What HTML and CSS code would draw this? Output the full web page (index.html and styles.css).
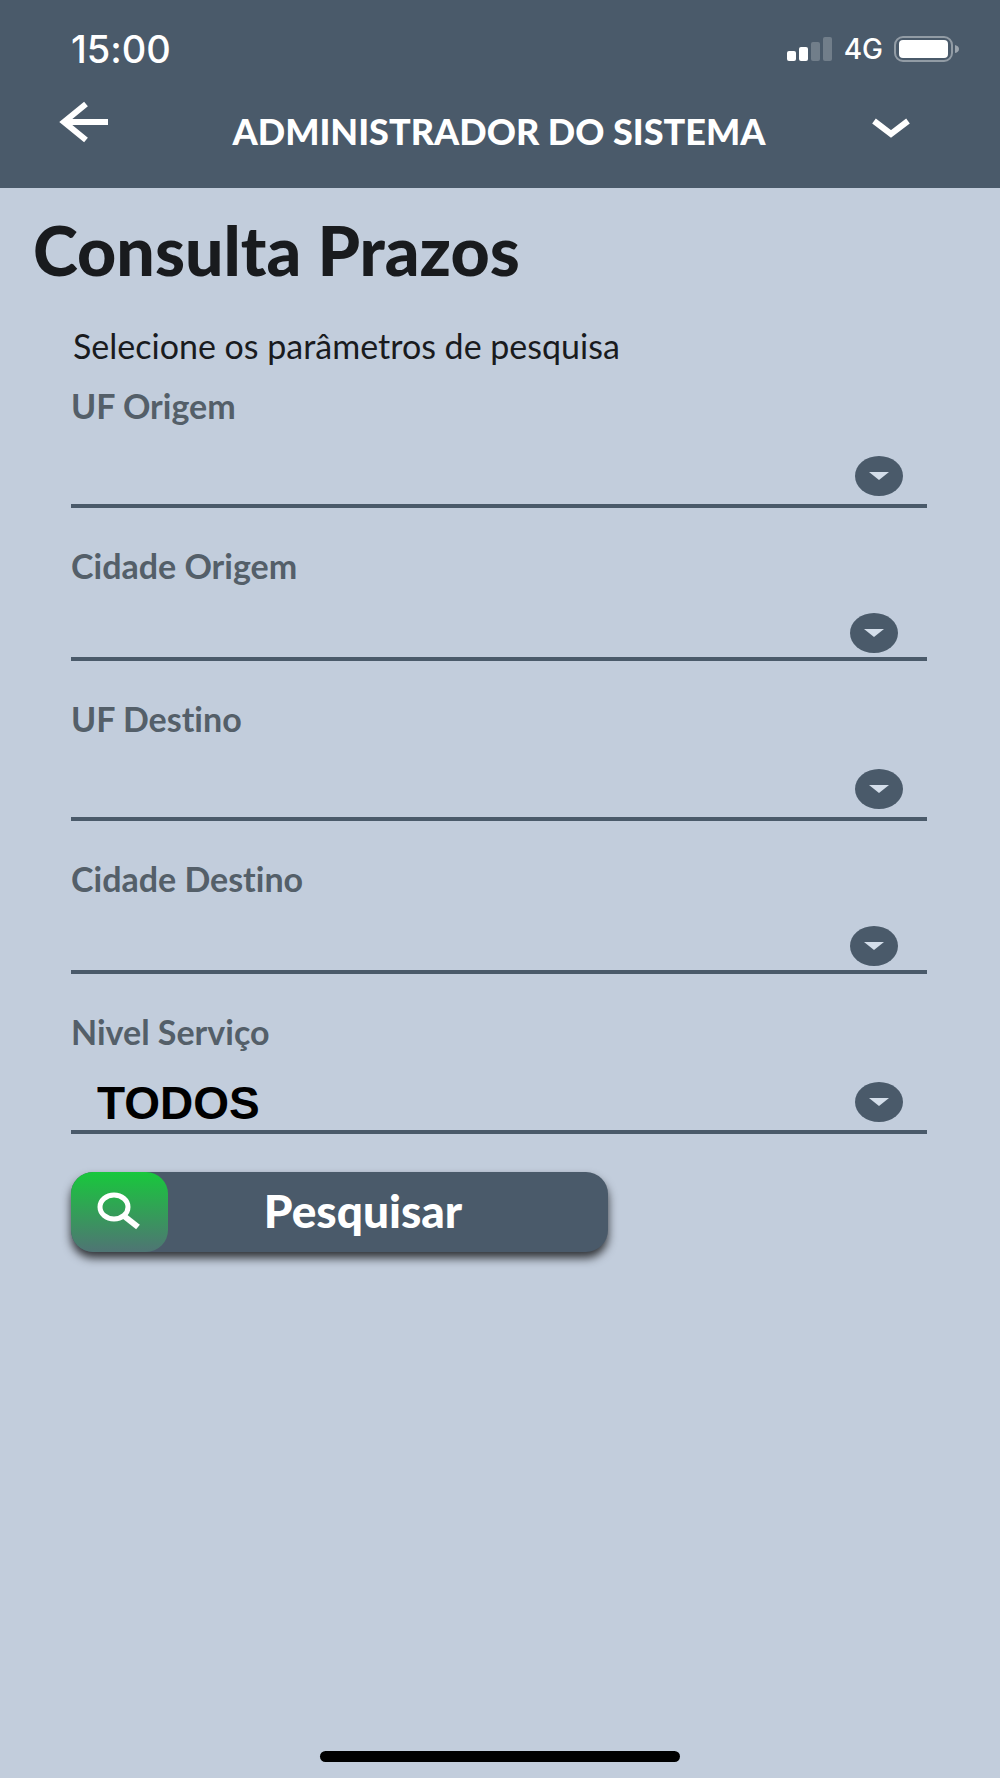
FILE: index.html
```html
<!DOCTYPE html>
<html lang="pt-BR">
<head>
  <meta charset="utf-8">
  <meta name="viewport" content="width=device-width, initial-scale=1">
  <title>Consulta Prazos</title>
  <link rel="stylesheet" href="styles.css">
</head>
<body>
  <header class="header">
    <div class="status">
      <span class="status-time">15:00</span>
      <div class="status-icons">
        <svg width="46" height="24" viewBox="0 0 46 24" fill="#fff" aria-hidden="true">
          <rect x="0" y="14" width="9" height="10" rx="2"/>
          <rect x="12" y="10" width="9" height="14" rx="2"/>
          <rect x="24" y="5" width="9" height="19" rx="2" opacity=".22"/>
          <rect x="36" y="0" width="9" height="24" rx="2" opacity=".22"/>
        </svg>
        <span class="status-network">4G</span>
        <svg width="66" height="26" viewBox="0 0 66 26" aria-hidden="true">
          <rect x="1" y="1" width="57" height="24" rx="8" fill="none" stroke="#fff" stroke-opacity=".4" stroke-width="2"/>
          <rect x="5" y="4" width="49" height="18" rx="4" fill="#fff"/>
          <path d="M61 9q4 1 4 4t-4 4z" fill="#fff" fill-opacity=".45"/>
        </svg>
      </div>
    </div>
    <div class="appbar">
      <button class="icon-button" type="button" aria-label="Voltar">
        <svg width="50" height="42" viewBox="0 0 50 42" fill="none" stroke="#fff" stroke-width="6" aria-hidden="true">
          <path d="M27 3L5 21l22 18M4 21h45"/>
        </svg>
      </button>
      <span class="appbar-title">ADMINISTRADOR DO SISTEMA</span>
      <button class="icon-button menu-button" type="button" aria-label="Abrir menu">
        <svg width="38" height="20" viewBox="0 0 38 20" fill="none" stroke="#fff" stroke-width="6" aria-hidden="true">
          <path d="M2 3l17 13L36 3"/>
        </svg>
      </button>
    </div>
  </header>

  <main class="main">
    <h1 class="title">Consulta Prazos</h1>
    <form class="form">
      <p class="hint">Selecione os parâmetros de pesquisa</p>

      <div class="field">
        <label class="label" for="uf-origem">UF Origem</label>
        <div class="control">
          <select class="select" id="uf-origem"><option></option></select>
          <svg class="arrow" viewBox="0 0 48 40" aria-hidden="true"><ellipse cx="24" cy="20" rx="24" ry="20" fill="#4a5a6a"/><path d="M14 16h20l-10 8z" fill="#d4deea"/></svg>
        </div>
      </div>

      <div class="field">
        <label class="label" for="cidade-origem">Cidade Origem</label>
        <div class="control control-compact">
          <select class="select" id="cidade-origem"><option></option></select>
          <svg class="arrow" viewBox="0 0 48 40" aria-hidden="true"><ellipse cx="24" cy="20" rx="24" ry="20" fill="#4a5a6a"/><path d="M14 16h20l-10 8z" fill="#d4deea"/></svg>
        </div>
      </div>

      <div class="field">
        <label class="label" for="uf-destino">UF Destino</label>
        <div class="control">
          <select class="select" id="uf-destino"><option></option></select>
          <svg class="arrow" viewBox="0 0 48 40" aria-hidden="true"><ellipse cx="24" cy="20" rx="24" ry="20" fill="#4a5a6a"/><path d="M14 16h20l-10 8z" fill="#d4deea"/></svg>
        </div>
      </div>

      <div class="field">
        <label class="label" for="cidade-destino">Cidade Destino</label>
        <div class="control control-compact">
          <select class="select" id="cidade-destino"><option></option></select>
          <svg class="arrow" viewBox="0 0 48 40" aria-hidden="true"><ellipse cx="24" cy="20" rx="24" ry="20" fill="#4a5a6a"/><path d="M14 16h20l-10 8z" fill="#d4deea"/></svg>
        </div>
      </div>

      <div class="field">
        <label class="label" for="nivel-servico">Nivel Serviço</label>
        <div class="control">
          <select class="select" id="nivel-servico"><option>TODOS</option></select>
          <svg class="arrow" viewBox="0 0 48 40" aria-hidden="true"><ellipse cx="24" cy="20" rx="24" ry="20" fill="#4a5a6a"/><path d="M14 16h20l-10 8z" fill="#d4deea"/></svg>
        </div>
      </div>

      <button class="search" type="submit">
        <span class="search-icon">
          <svg width="44" height="38" viewBox="0 0 44 38" fill="none" stroke="#fff" aria-hidden="true">
            <ellipse cx="17" cy="15" rx="14" ry="12" stroke-width="5"/>
            <path d="M27 24l14 11" stroke-width="6"/>
          </svg>
        </span>
        <span class="search-text">Pesquisar</span>
      </button>
    </form>
  </main>

  <div class="home-bar"></div>
</body>
</html>
```

FILE: styles.css
```css
* {
  box-sizing: border-box;
}

body {
  display: flex;
  flex-direction: column;
  min-height: 100vh;
  margin: 0;
  background: #c2cddc;
  color: #191b1e;
  font-family: Lato, "Noto Sans", sans-serif;
  font-variant-ligatures: none;
}

.header {
  padding: 29px 40px 28px 59px;
  background: #4a5a6a;
  color: #fff;
}

.status {
  display: flex;
  align-items: center;
  justify-content: space-between;
  height: 40px;
  padding-left: 12px;
  font-family: Inter, sans-serif;
}

.status-time {
  font-size: 38px;
  font-weight: 500;
}

.status-icons {
  display: flex;
  align-items: center;
  gap: 11px;
}

.status-network {
  font-size: 28px;
  font-weight: 500;
}

.appbar {
  display: grid;
  grid-template-columns: 50px 1fr 38px;
  align-items: center;
  height: 91px;
  padding: 14px 50px 0 0;
}

.appbar-title {
  padding: 18px 0 0 17px;
  font-size: 36px;
  font-weight: 900;
  line-height: 44px;
  text-align: center;
}

.icon-button {
  display: flex;
  padding: 0;
  border: 0;
  background: none;
}

.menu-button {
  padding-top: 12px;
}

.main {
  padding: 24px 73px 48px 71px;
}

.title {
  margin: 0 0 0 -38px;
  font-size: 68px;
  font-weight: 900;
  line-height: 76px;
}

.form {
  margin-top: 38px;
}

.hint {
  margin: 0 0 20px 2px;
  font-size: 34px;
  line-height: 40px;
}

.field {
  margin-bottom: 38px;
}

.label {
  display: block;
  color: #545f69;
  font-size: 34px;
  font-weight: 700;
  line-height: 40px;
}

.control {
  display: grid;
  align-items: end;
  height: 82px;
  padding-right: 24px;
  border-bottom: 4px solid #4a5a6a;
}

.control-compact {
  height: 75px;
  padding-right: 29px;
}

.select,
.arrow {
  grid-area: 1 / 1;
}

.select {
  width: 100%;
  height: 54px;
  padding: 0 72px 0 26px;
  border: 0;
  background: none;
  color: #000;
  font: 700 46px "Liberation Sans", Arial, sans-serif;
  appearance: none;
}

.arrow {
  justify-self: end;
  width: 48px;
  height: 40px;
  margin-bottom: 8px;
  pointer-events: none;
}

.control-compact .arrow {
  margin-bottom: 4px;
}

.search {
  display: flex;
  align-items: stretch;
  width: 537px;
  max-width: 100%;
  height: 80px;
  padding: 0;
  border: 0;
  border-radius: 22px;
  background: #4a5a6a;
  box-shadow: 0 6px 10px rgba(0, 0, 0, .75);
  color: #fff;
  font: 900 46px Lato, "Noto Sans", sans-serif;
}

.search-icon {
  display: flex;
  align-items: center;
  justify-content: center;
  width: 97px;
  padding: 0 2px 2px 0;
  border-radius: 22px;
  background: linear-gradient(#18c83c, #4f7474);
}

.search-text {
  flex: 1;
  align-self: center;
  padding: 0 50px 4px 0;
}

.home-bar {
  width: 36%;
  height: 11px;
  margin: auto auto 16px;
  border-radius: 6px;
  background: #000;
}
```
